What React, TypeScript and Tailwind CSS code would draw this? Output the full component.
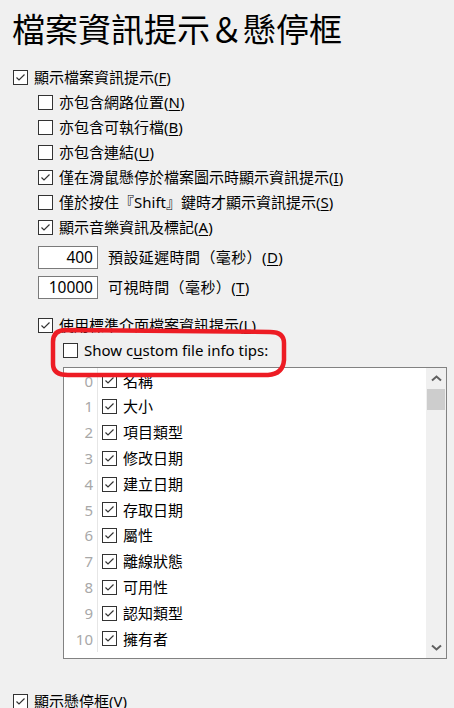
import React from "react"

type RowProps = {
    checked?: boolean
    indent?: string
    children: React.ReactNode
}

const Check = ({ checked }: { checked?: boolean }) => {
    return (
        <span className="w-[15px] h-[15px] flex-none border border-[#333333] bg-white flex items-center justify-center">
            {checked && (
                <svg width="13" height="13" viewBox="0 0 13 13">
                    <polyline points="2.5,6.5 5,9 10.5,3.5" fill="none" stroke="#333333" strokeWidth="1.2" />
                </svg>
            )}
        </span>
    )
}

const Key = ({ k }: { k: string }) => (
    <span>
        (<u className="underline-offset-2">{k}</u>)
    </span>
)

const Row = ({ checked, indent = "pl-[13px]", children }: RowProps) => {
    return (
        <div className={`${indent} h-[25px] flex items-center gap-[6px] whitespace-nowrap`}>
            <Check checked={checked} />
            <span className="leading-[25px]">{children}</span>
        </div>
    )
}

const NumberRow = ({ value, children }: { value: string; children: React.ReactNode }) => {
    return (
        <div className="pl-[38px] h-[30px] flex items-center gap-[10px] whitespace-nowrap">
            <span className="w-[60px] h-[23px] border border-[#7a7a7a] bg-white text-right pr-[4px] leading-[21px] text-[15.5px]">{value}</span>
            <span className="leading-[25px] tracking-[0.4px]">{children}</span>
        </div>
    )
}

const columnas = ["名稱", "大小", "項目類型", "修改日期", "建立日期", "存取日期", "屬性", "離線狀態", "可用性", "認知類型", "擁有者"]

const Chevron = ({ down }: { down?: boolean }) => (
    <svg width="11" height="7" viewBox="0 0 11 7">
        <polyline
            points={down ? "1,1.5 5.5,5.5 10,1.5" : "1,5.5 5.5,1.5 10,5.5"}
            fill="none"
            stroke="#606060"
            strokeWidth="2"
        />
    </svg>
)

function ListaColumnas() {
    return (
        <div className="ml-[63px] mt-[4px] w-[384px] h-[292px] border border-[#828282] bg-white flex overflow-hidden">
            <div className="flex-1 flex flex-col">
                {columnas.map((c, i) => (
                    <div key={c} className="h-[25.8px] flex items-center flex-none">
                        <span className="w-[34px] h-full flex items-center justify-end pr-[4px] text-[#a8a8a8] border-r border-[#e6e6e6]">{i}</span>
                        <span className="pl-[4px] flex items-center gap-[6px]">
                            <Check checked />
                            <span>{c}</span>
                        </span>
                    </div>
                ))}
            </div>
            <div className="w-[20px] bg-[#f0f0f0] flex flex-col">
                <div className="h-[21px] flex items-center justify-center">
                    <Chevron />
                </div>
                <div className="h-[21px] mx-[1px] bg-[#cdcdcd]" />
                <div className="flex-1" />
                <div className="h-[22px] flex items-center justify-center">
                    <Chevron down />
                </div>
            </div>
        </div>
    )
}

export default function App() {
    return (
        <div className="relative w-[454px] h-[708px] overflow-hidden bg-[#f0f0f0] text-black text-[15px] font-['Noto_Sans','Noto_Sans_CJK_TC',sans-serif]">
            <h1 className="pl-[12px] mt-[8px] h-[40px] leading-[40px] text-[33px] font-normal font-['Noto_Sans_CJK_TC',sans-serif]">檔案資訊提示＆懸停框</h1>

            <div className="mt-[17px]">
                <Row checked>顯示檔案資訊提示<Key k="F" /></Row>
                <Row indent="pl-[38px]">亦包含網路位置<Key k="N" /></Row>
                <Row indent="pl-[38px]">亦包含可執行檔<Key k="B" /></Row>
                <Row indent="pl-[38px]">亦包含連結<Key k="U" /></Row>
                <Row indent="pl-[38px]" checked>僅在滑鼠懸停於檔案圖示時顯示資訊提示<Key k="I" /></Row>
                <Row indent="pl-[38px]">僅於按住『Shift』鍵時才顯示資訊提示<Key k="S" /></Row>
                <Row indent="pl-[38px]" checked>顯示音樂資訊及標記<Key k="A" /></Row>
            </div>

            <div className="mt-[2px]">
                <NumberRow value="400">預設延遲時間（毫秒）<Key k="D" /></NumberRow>
                <NumberRow value="10000">可視時間（毫秒）<Key k="T" /></NumberRow>
            </div>

            <div className="mt-[11px]">
                <Row indent="pl-[38px]" checked>使用標準介面檔案資訊提示<Key k="L" /></Row>
                <Row indent="pl-[63px]">Show c<u className="underline-offset-2">u</u>stom file info tips:</Row>
            </div>

            <ListaColumnas />

            <div className="mt-[30px]">
                <Row checked>顯示懸停框<Key k="V" /></Row>
            </div>

            {/* anotación roja a mano */}
            <svg className="absolute left-0 top-0 pointer-events-none" width="454" height="708" viewBox="0 0 454 708">
                <path
                    d="M66 330 Q53 330 53 342 L53 364 Q53 375 68 375 L268 375 Q283 374 284 360 L284 343 Q284 332 270 332 Z"
                    fill="none"
                    stroke="#ed1c24"
                    strokeWidth="4.5"
                />
            </svg>
        </div>
    )
}
